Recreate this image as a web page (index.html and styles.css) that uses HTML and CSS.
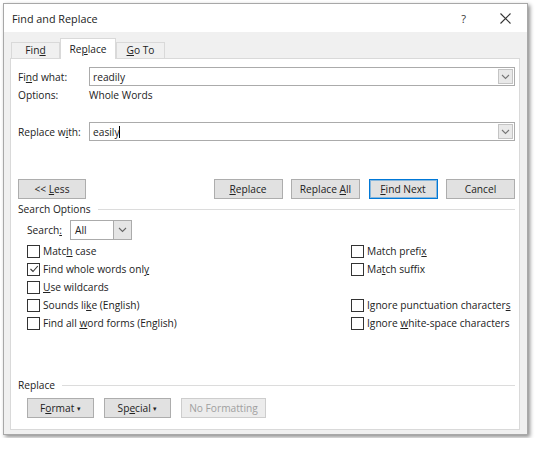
FILE: index.html
```html
<!DOCTYPE html>
<html lang="en">
<head>
    <meta charset="UTF-8">
    <meta name="viewport" content="width=device-width, initial-scale=1.0">
    <title>Find and Replace</title>
    <link rel="stylesheet" href="styles.css">
</head>
<body>

<div class="window">
    <div class="titlebar">
        <span class="title">Find and Replace</span>
        <span class="help">?</span>
        <span class="close">
            <svg width="11" height="11" viewBox="0 0 11 11"><path d="M0.5 0.5 L10.5 10.5 M10.5 0.5 L0.5 10.5" stroke="#333" stroke-width="1.1" fill="none"/></svg>
        </span>
    </div>

    <div class="body">
        <div class="tabs">
            <div class="tab"><span>Fin<u>d</u></span></div>
            <div class="tab active"><span>Re<u>p</u>lace</span></div>
            <div class="tab"><span><u>G</u>o To</span></div>
        </div>

        <div class="panel">
            <div class="field find-row">
                <span class="label">Fi<u>n</u>d what:</span>
                <div class="combo">
                    <span class="value">readily</span>
                    <span class="drop"><svg width="9" height="6" viewBox="0 0 9 6"><path d="M1 1 L4.5 4.5 L8 1" stroke="#777" stroke-width="1.1" fill="none"/></svg></span>
                </div>
            </div>
            <div class="field options-row">
                <span class="label">Options:</span>
                <span class="option-value">Whole Words</span>
            </div>
            <div class="field replace-row">
                <span class="label">Replace w<u>i</u>th:</span>
                <div class="combo">
                    <span class="value">easily<span class="caret"></span></span>
                    <span class="drop"><svg width="9" height="6" viewBox="0 0 9 6"><path d="M1 1 L4.5 4.5 L8 1" stroke="#777" stroke-width="1.1" fill="none"/></svg></span>
                </div>
            </div>

            <div class="actions">
                <button class="btn less">&lt;&lt; <u>L</u>ess</button>
                <div class="spacer"></div>
                <button class="btn"><u>R</u>eplace</button>
                <button class="btn">Replace <u>A</u>ll</button>
                <button class="btn default"><u>F</u>ind Next</button>
                <button class="btn">Cancel</button>
            </div>

            <div class="group-title"><span>Search Options</span><div class="rule"></div></div>

            <div class="search-row">
                <span class="search-label">Search<u>:</u></span>
                <div class="select">
                    <span class="value">All</span>
                    <span class="drop"><svg width="9" height="6" viewBox="0 0 9 6"><path d="M1 1 L4.5 4.5 L8 1" stroke="#666" stroke-width="1.1" fill="none"/></svg></span>
                </div>
            </div>

            <div class="checks">
                <div class="col">
                    <div class="check"><span class="box"></span><span>Matc<u>h</u> case</span></div>
                    <div class="check"><span class="box"><svg width="10" height="10" viewBox="0 0 10 10"><path d="M1.5 5 L4 7.5 L8.8 2" stroke="#333" stroke-width="1.1" fill="none"/></svg></span><span>Find whole words onl<u>y</u></span></div>
                    <div class="check"><span class="box"></span><span><u>U</u>se wildcards</span></div>
                    <div class="check"><span class="box"></span><span>Sounds li<u>k</u>e (English)</span></div>
                    <div class="check"><span class="box"></span><span>Find all <u>w</u>ord forms (English)</span></div>
                </div>
                <div class="col right">
                    <div class="check"><span class="box"></span><span>Match prefi<u>x</u></span></div>
                    <div class="check"><span class="box"></span><span>Ma<u>t</u>ch suffix</span></div>
                    <div class="check"></div>
                    <div class="check"><span class="box"></span><span>Ignore punctuation character<u>s</u></span></div>
                    <div class="check"><span class="box"></span><span>Ignore <u>w</u>hite-space characters</span></div>
                </div>
            </div>

            <div class="group-title replace-title"><span>Replace</span><div class="rule"></div></div>

            <div class="bottom-actions">
                <button class="btn small">F<u>o</u>rmat <span class="arrow">&#9662;</span></button>
                <button class="btn small">Sp<u>e</u>cial <span class="arrow">&#9662;</span></button>
                <button class="btn wide disabled">No Formatting</button>
            </div>
        </div>
    </div>
</div>

</body>
</html>
```

FILE: styles.css
```css
body {
    margin: 0;
    padding: 3px;
    background-color: #fff;
    font-family: "Open Sans", "Noto Sans", sans-serif;
    font-size: 10.2px;
    color: #222;
}

u {
    text-decoration-thickness: 1px;
    text-underline-offset: 1px;
}

.window {
    width: 523px;
    height: 430px;
    border: 1px solid #a8a8a8;
    background-color: #f0f0f0;
    box-shadow: 2px 2px 4px rgba(0, 0, 0, 0.45);
    display: flex;
    flex-direction: column;
}

.titlebar {
    height: 28px;
    background-color: #fff;
    display: flex;
    align-items: center;
    padding: 0 0 0 8px;
}

.titlebar .title {
    font-size: 10.8px;
    color: #222;
    flex: 1;
}

.titlebar .help {
    font-size: 11px;
    color: #333;
    margin-right: 34px;
}

.titlebar .close {
    display: flex;
    margin-right: 16px;
}

.body {
    flex: 1;
    display: flex;
    flex-direction: column;
    padding: 6px 7px 4px 6px;
}

.tabs {
    display: flex;
    align-items: flex-end;
    height: 20px;
    padding-left: 1px;
    position: relative;
    z-index: 1;
}

.tab {
    height: 14px;
    width: 47px;
    border: 1px solid #d9d9d9;
    border-bottom: none;
    background-color: #f0f0f0;
    display: flex;
    align-items: center;
    justify-content: center;
    padding-bottom: 1px;
}

.tab.active {
    height: 19px;
    width: 54px;
    background-color: #fff;
    margin-bottom: -1px;
}

.panel {
    flex: 1;
    background-color: #fff;
    border: 1px solid #d9d9d9;
    padding: 8px 4px 0 7px;
    display: flex;
    flex-direction: column;
}

.field {
    display: flex;
    align-items: center;
    height: 19px;
}

.field .label {
    width: 71px;
}

.options-row {
    height: 18px;
}

.replace-row {
    margin-top: 18px;
}

.combo {
    flex: 1;
    height: 17px;
    border: 1px solid #ababab;
    display: flex;
    align-items: center;
    justify-content: space-between;
}

.combo .value {
    padding-left: 3px;
    display: flex;
    align-items: center;
}

.caret {
    display: inline-block;
    width: 1px;
    height: 12px;
    background-color: #000;
}

.drop {
    width: 15px;
    height: 15px;
    margin-right: 1px;
    background-color: #e9e9e9;
    border: 1px solid #c4c4c4;
    display: flex;
    align-items: center;
    justify-content: center;
    box-sizing: border-box;
}

.actions {
    display: flex;
    gap: 8.5px;
    margin-top: 38px;
}

.spacer {
    flex: 1;
}

.btn {
    font-family: inherit;
    font-size: 10.2px;
    color: #222;
    width: 69px;
    height: 20px;
    padding: 0;
    background-color: #e1e1e1;
    border: 1px solid #adadad;
    cursor: pointer;
}

.btn.less {
    width: 68px;
}

.btn.default {
    border-color: #0078d7;
    box-shadow: inset 0 0 0 1px rgba(0, 120, 215, 0.4);
}

.group-title {
    display: flex;
    align-items: center;
    height: 16px;
    margin-top: 2px;
    gap: 7px;
}

.rule {
    flex: 1;
    height: 1px;
    background-color: #dcdcdc;
}

.search-row {
    display: flex;
    align-items: center;
    height: 20px;
    margin-top: 3px;
    padding-left: 9px;
}

.search-label {
    width: 43px;
}

.select {
    width: 60px;
    height: 18px;
    border: 1px solid #ababab;
    display: flex;
    align-items: center;
    justify-content: space-between;
}

.select .value {
    padding-left: 4px;
}

.select .drop {
    width: 18px;
    height: 18px;
    margin-right: 0;
    border: none;
    border-left: 1px solid #ababab;
    background-color: #e5e5e5;
}

.checks {
    display: flex;
    margin-top: 2px;
    padding-left: 9px;
}

.col {
    width: 324px;
    flex-shrink: 0;
}

.col.right {
    width: auto;
    flex-shrink: 1;
}

.check {
    height: 18px;
    display: flex;
    align-items: center;
    white-space: nowrap;
}

.box {
    width: 11px;
    height: 11px;
    border: 1px solid #333;
    background-color: #fff;
    margin-right: 3px;
    display: flex;
    align-items: center;
    justify-content: center;
    flex-shrink: 0;
}

.replace-title {
    margin-top: 45px;
}

.bottom-actions {
    display: flex;
    gap: 10px;
    margin-top: 5px;
    padding-left: 9px;
}

.btn.small {
    width: 67px;
}

.btn.wide {
    width: 85px;
}

.btn.disabled {
    color: #a0a0a0;
    background-color: #ececec;
    border-color: #cdcdcd;
    cursor: default;
}

.arrow {
    font-size: 7px;
    vertical-align: 1px;
}
```
